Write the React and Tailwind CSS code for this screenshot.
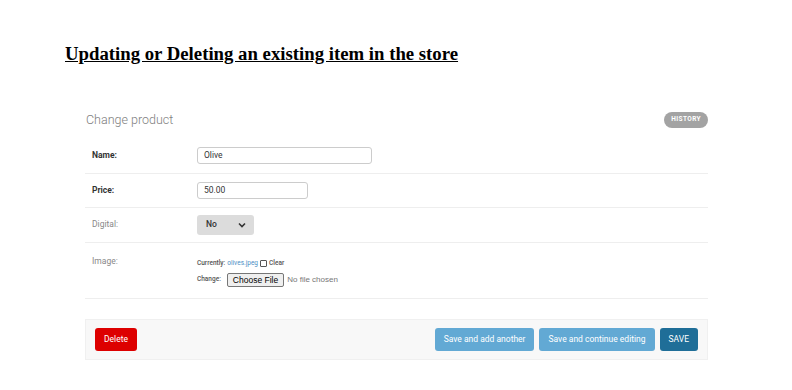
import React from "react";

export default function App() {
  const roboto = { fontFamily: "Roboto, 'Liberation Sans', sans-serif" };
  return (
    <div className="w-[792px] h-[390px] bg-white overflow-hidden" style={roboto}>
      <div className="pt-[45px] pl-[65px]">
        <h1
          className="text-[18.75px] font-bold underline text-black leading-none"
          style={{ fontFamily: "'Liberation Serif', 'Times New Roman', serif" }}
        >
          Updating or Deleting an existing item in the store
        </h1>
      </div>

      <div className="mx-[85px] mt-[44px] w-[623px]">
        <div className="flex items-center justify-between h-[25px]">
          <div className="text-[12.5px] font-light text-[#808080] leading-none pl-[1px]">Change product</div>
          <div className="h-[16px] px-[7px] rounded-full bg-[#a3a3a3] text-white text-[6.5px] font-bold tracking-[0.4px] flex items-center">
            HISTORY
          </div>
        </div>

        <div className="mt-[5px]">
          {/* Name */}
          <div className="flex items-center h-[36px] border-b border-[#eee] px-[7px]">
            <div className="w-[105px] text-[8.5px] font-bold text-[#333]">Name:</div>
            <div className="w-[175px] h-[17px] border border-[#ccc] rounded-[3px] flex items-center px-[6px] text-[8.5px] text-[#333]">
              Olive
            </div>
          </div>
          {/* Price */}
          <div className="flex items-center h-[34px] border-b border-[#eee] px-[7px]">
            <div className="w-[105px] text-[8.5px] font-bold text-[#333]">Price:</div>
            <div className="w-[111px] h-[17px] border border-[#ccc] rounded-[3px] flex items-center px-[6px] text-[8.5px] text-[#333]">
              50.00
            </div>
          </div>
          {/* Digital */}
          <div className="flex items-center h-[35px] border-b border-[#eee] px-[7px]">
            <div className="w-[105px] text-[8.5px] text-[#888]">Digital:</div>
            <div className="w-[57px] h-[20px] bg-[#dcdcdc] rounded-[3px] flex items-center justify-between pl-[9px] pr-[8px] text-[8.5px] text-[#333] font-medium">
              <span>No</span>
              <svg width="8" height="6" viewBox="0 0 8 6">
                <path d="M1 1.5 L4 4.5 L7 1.5" fill="none" stroke="#333" strokeWidth="1.6" />
              </svg>
            </div>
          </div>
          {/* Image */}
          <div className="flex items-start h-[56px] border-b border-[#eee] px-[7px] pt-[14px]">
            <div className="w-[105px] text-[8.5px] text-[#888] leading-none">Image:</div>
            <div className="flex flex-col pt-[2px]">
              <div className="flex items-center h-[10px] text-[6.5px] text-[#555] font-medium">
                <span>Currently:</span>
                <span className="ml-[2px] text-[#4a8dc4] font-normal">olives.jpeg</span>
                <span className="ml-[2px] w-[7px] h-[7px] border border-[#555] rounded-[1px] inline-block"></span>
                <span className="ml-[2px]">Clear</span>
              </div>
              <div className="flex items-center mt-[4px] h-[15px]">
                <span className="text-[6.5px] text-[#555] font-medium">Change:</span>
                <span
                  className="ml-[6px] h-[14px] px-[5px] border border-[#767676] rounded-[2px] bg-[#efefef] text-[8.5px] text-black flex items-center"
                  style={{ fontFamily: "'Liberation Sans', Arial, sans-serif" }}
                >
                  Choose File
                </span>
                <span
                  className="ml-[3px] text-[8px] text-[#777]"
                  style={{ fontFamily: "'Liberation Sans', Arial, sans-serif" }}
                >
                  No file chosen
                </span>
              </div>
            </div>
          </div>
        </div>

        <div className="mt-[20px] h-[41px] bg-[#f8f8f8] border border-[#f0f0f0] flex items-center justify-between px-[9px]">
          <div className="h-[23px] px-[9px] bg-[#dd0000] rounded-[3px] text-white text-[8.5px] flex items-center">
            Delete
          </div>
          <div className="flex items-center gap-[5px]">
            <div className="h-[23px] px-[9px] bg-[#62a9d4] rounded-[3px] text-white text-[8.5px] flex items-center">
              Save and add another
            </div>
            <div className="h-[23px] px-[9px] bg-[#62a9d4] rounded-[3px] text-white text-[8.5px] flex items-center">
              Save and continue editing
            </div>
            <div className="h-[23px] px-[9px] bg-[#1f6e98] rounded-[3px] text-white text-[8.5px] flex items-center">
              SAVE
            </div>
          </div>
        </div>
      </div>
    </div>
  );
}
